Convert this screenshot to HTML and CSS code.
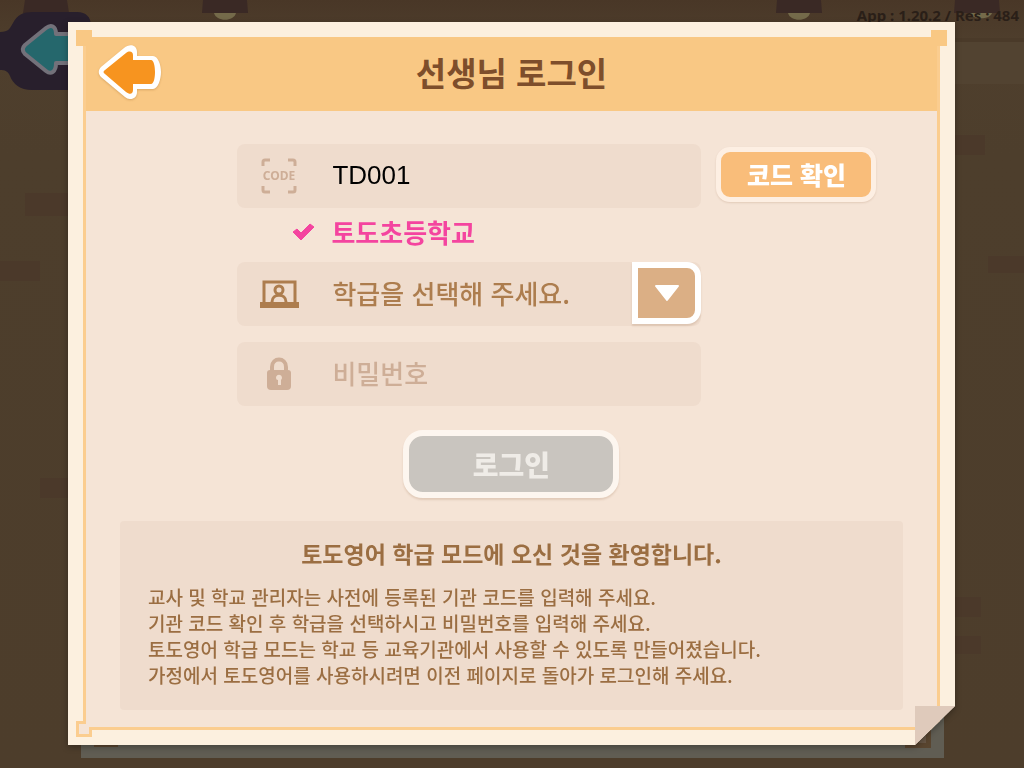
FILE: index.html
```html
<!DOCTYPE html>
<html lang="ko">
<head>
  <meta charset="UTF-8">
  <meta name="viewport" content="width=device-width, initial-scale=1.0">
  <title>선생님 로그인</title>
  <link rel="stylesheet" href="styles.css">
</head>
<body>
  <svg class="scene" viewBox="0 0 1024 768" preserveAspectRatio="none" aria-hidden="true">
    <defs>
      <linearGradient id="wall" x1="0" y1="0" x2="0" y2="1">
        <stop offset="0" stop-color="#493727"/>
        <stop offset="0.06" stop-color="#4f3f2d"/>
        <stop offset="0.2" stop-color="#4d3e2c"/>
        <stop offset="1" stop-color="#4d3d2b"/>
      </linearGradient>
    </defs>
    <rect width="1024" height="768" fill="url(#wall)"/>
    <path d="M955 42h69v42h-69z" fill="#524331"/>
    <path d="M955 38h69v4h-69z" fill="#4a3a29"/>
    <!-- bricks -->
    <g fill="#4b392a">
      <rect x="25" y="193" width="43" height="23"/>
      <rect x="0" y="261" width="40" height="20"/>
      <rect x="40" y="478" width="28" height="20"/>
      <rect x="955" y="135" width="30" height="20"/>
      <rect x="988" y="256" width="36" height="17"/>
      <rect x="955" y="597" width="26" height="20"/>
      <rect x="955" y="636" width="26" height="18"/>
    </g>
    <!-- lamps -->
    <g fill="#3a2925">
      <path d="M25 0h42l2 13H23z"/>
      <path d="M203 0h44l1 13h-46z"/>
      <path d="M777 0h44l1 13h-46z"/>
      <path d="M955 0h44l1 13h-46z"/>
    </g>
    <g fill="#746a4a">
      <path d="M214 13h22c-2 9-20 9-22 0z"/>
      <path d="M788 13h22c-2 9-20 9-22 0z"/>
      <path d="M970 13h22c-2 7-20 7-22 0z"/>
    </g>
    <path d="M0 32c9 0 10-4 13-9 4-8 10-11 20-11h44c9 0 14 5 14 14v64H32c-12 0-19-6-22-14-2-5-5-6-10-6z" fill="#281f2c"/>
    <path d="M25 45 46 28c5-4 10-2 10 6h30v29H56c0 9-5 12-10 8L25 54c-3-3-3-6 0-9z" fill="#25676c" stroke="#73717a" stroke-width="4" stroke-linejoin="round"/>
    <!-- sheet lying underneath -->
    <rect x="81" y="700" width="863" height="58" fill="#605d53"/>
    <path d="M94 742h24v5H94zM905 730h26v18h-26z" fill="#59452f"/>
    <path d="M919 730h7v13h-7z" fill="#685746"/>
  </svg>
  <div class="version">App : 1.20.2 / Res : 484</div>

  <main class="page">
    <div class="paper-shadow">
      <div class="paper">
        <div class="frame">
          <header class="header">
            <button class="back" type="button" aria-label="뒤로">
              <svg viewBox="0 0 64 54" width="64" height="54">
                <path d="M3 22 26 3c6-5 13-3 13 4v4h16c5 0 8 9 8 16s-3 17-8 17H39v3c0 7-7 9-12 5L3 32c-3-3-3-7 0-10z" fill="#fff"/>
                <path d="M7 25 28 8c4-3 7-1 7 2v5h18c3 0 4 7 4 12s-1 12-4 12H35v6c0 4-3 5-7 2L7 29c-2-1-2-3 0-4z" fill="#f7941f"/>
              </svg>
            </button>
            <h1 class="title">선생님 로그인</h1>
          </header>

          <form class="login-form">
            <div class="field code-field">
              <svg class="icon" viewBox="0 0 40 40" width="40" height="40">
                <path d="M4 10V6q0-2 2-2h5M29 4h5q2 0 2 2v4M36 30v4q0 2-2 2h-5M11 36H6q-2 0-2-2v-4" fill="none" stroke="#ceae97" stroke-width="3"/>
                <text x="20" y="24" text-anchor="middle" class="code-label">CODE</text>
              </svg>
              <input class="control code-input" type="text" value="TD001" aria-label="기관 코드">
            </div>
            <button class="check-button" type="button">코드 확인</button>

            <p class="school">
              <svg viewBox="0 0 24 18" width="24" height="18" aria-hidden="true">
                <path d="m2 9 4-3 4 4 9-9 4 3-13 13z" fill="#f4449f" stroke="#f4449f" stroke-linejoin="round"/>
              </svg>
              토도초등학교
            </p>

            <div class="field class-field">
              <svg class="icon" viewBox="0 0 40 30" width="40" height="30">
                <path d="M5 24V3h31v21" fill="none" stroke="#ad7d4e" stroke-width="3"/>
                <path d="M1 23h39v6H1z" fill="#ad7d4e"/>
                <circle cx="20" cy="11" r="4" fill="none" stroke="#ad7d4e" stroke-width="3"/>
                <path d="M13 23c0-9 14-9 14 0" fill="none" stroke="#ad7d4e" stroke-width="3"/>
              </svg>
              <select class="control class-select" aria-label="학급">
                <option>학급을 선택해 주세요.</option>
              </select>
              <span class="arrow">
                <svg viewBox="0 0 26 18" width="26" height="18" aria-hidden="true">
                  <path d="M2 2h22L13 16z" fill="#fff" stroke="#fff" stroke-width="2" stroke-linejoin="round"/>
                </svg>
              </span>
            </div>

            <div class="field password-field">
              <svg class="icon" viewBox="0 0 24 34" width="24" height="34">
                <path d="M5 16V10c0-10 14-10 14 0v6" fill="none" stroke="#ceae97" stroke-width="4"/>
                <path d="M3 13h18q3 0 3 3v13q0 4-4 4H4q-4 0-4-4V16q0-3 3-3z" fill="#ceae97"/>
                <path d="M9 21a3 3 0 1 1 5 2v5h-3v-5q-2 0-2-2z" fill="#efdccd"/>
              </svg>
              <input class="control" type="password" placeholder="비밀번호" aria-label="비밀번호">
            </div>

            <button class="login-button" type="submit" disabled>로그인</button>
          </form>

          <section class="notice">
            <h2 class="notice-title">토도영어 학급 모드에 오신 것을 환영합니다.</h2>
            <p>교사 및 학교 관리자는 사전에 등록된 기관 코드를 입력해 주세요.</p>
            <p>기관 코드 확인 후 학급을 선택하시고 비밀번호를 입력해 주세요.</p>
            <p>토도영어 학급 모드는 학교 등 교육기관에서 사용할 수 있도록 만들어졌습니다.</p>
            <p>가정에서 토도영어를 사용하시려면 이전 페이지로 돌아가 로그인해 주세요.</p>
          </section>
        </div>
        <span class="corner top-left"></span>
        <span class="corner top-right"></span>
        <span class="corner bottom-left"></span>
        <span class="fold"></span>
      </div>
    </div>
  </main>
</body>
</html>
```
FILE: styles.css
```css
* {
  box-sizing: border-box;
}

body {
  margin: 0;
  min-height: 100vh;
  position: relative;
  background: #4d3d2b;
  font-family: "Noto Sans CJK KR", "Noto Sans CJK JP", sans-serif;
}

button,
input,
select {
  font-family: inherit;
}

/* Backdrop */
.scene {
  position: absolute;
  top: 0;
  left: 0;
  width: 100%;
  height: 100%;
}

.version {
  position: absolute;
  top: 5px;
  right: 5px;
  font: bold 15px/20px "Noto Sans", sans-serif;
  color: #2a1f18;
}

.page {
  position: relative;
  padding: 22px 69px 23px 68px;
}

/* Paper */
.paper-shadow {
  filter: drop-shadow(0 2px 3px rgba(0, 0, 0, 0.3));
}

.paper {
  position: relative;
  padding: 15px;
  background: #fcf0df;
  clip-path: polygon(0 0, 100% 0, 100% calc(100% - 39px), calc(100% - 40px) 100%, 0 100%);
}

.frame {
  border: 3px solid #fbcd8f;
  border-top: none;
  background: #f5e4d6;
  padding-bottom: 17px;
}

.corner {
  position: absolute;
  width: 16px;
  height: 16px;
  background: #f9c884;
}

.top-left {
  top: 8px;
  left: 8px;
}

.top-right {
  top: 8px;
  right: 8px;
}

/* outlined notch, open towards the frame */
.bottom-left {
  bottom: 8px;
  left: 8px;
  background: #f5e4d6;
  border: 3px solid #fbcd8f;
  clip-path: polygon(0 0, 10px 0, 10px 6px, 100% 6px, 100% 100%, 0 100%);
}

.fold {
  position: absolute;
  right: 0;
  bottom: 0;
  width: 40px;
  height: 39px;
  background: #dfcabb;
}

/* Header */
.header {
  display: grid;
  grid-template-columns: 64px 1fr 64px;
  align-items: center;
  height: 74px;
  padding: 0 12px 4px;
  background: #f9c884;
}

.back {
  height: 54px;
  padding: 0;
  border: none;
  background: none;
  cursor: pointer;
  filter: drop-shadow(0 1px 1px rgba(150, 90, 20, 0.3));
}

.back svg {
  display: block;
}

.title {
  margin: 0;
  font-size: 33px;
  line-height: 48px;
  text-align: center;
  color: #7e4e2b;
}

/* Form */
.login-form {
  display: grid;
  grid-template-columns: 9fr minmax(0, 464px) 14fr;
  align-items: center;
  padding-top: 33px;
}

.field {
  grid-column: 2;
  display: grid;
  grid-template-columns: 83px 1fr 69px;
  height: 64px;
  border-radius: 8px;
  background: #efdccd;
}

.icon {
  grid-area: 1 / 1;
  place-self: center;
  z-index: 1;
}

.code-label {
  font: bold 12px "Noto Sans", sans-serif;
  fill: #ceae97;
}

.control {
  grid-area: 1 / 1 / 2 / 4;
  width: 100%;
  min-width: 0;
  padding: 0 16px 4px 95px;
  border: none;
  border-radius: 8px;
  outline: none;
  background: none;
  font-size: 26px;
  color: #ad7d4e;
}

.control::placeholder {
  color: #ceae97;
  opacity: 1;
}

.code-input {
  padding-bottom: 2px;
  font-family: "Liberation Sans", Arial, sans-serif;
  color: #000;
}

.class-select {
  appearance: none;
  font-weight: 500;
  cursor: pointer;
}

.arrow {
  grid-area: 1 / 3;
  display: grid;
  place-items: center;
  height: 62px;
  border: 6px solid #fff;
  border-radius: 0 14px 14px 0;
  background: #dbaf85;
  box-shadow: 0 2px 2px rgba(120, 70, 30, 0.15);
  pointer-events: none;
}

.check-button {
  grid-column: 3;
  justify-self: start;
  width: 160px;
  height: 55px;
  margin: 0 0 3px 15px;
  padding: 0 0 2px;
  border: 5px solid #fdefe3;
  border-radius: 14px;
  background: #f9bd7a;
  box-shadow: 0 1px 2px rgba(120, 70, 30, 0.15);
  font-size: 25px;
  font-weight: 900;
  line-height: 40px;
  color: #fff;
  cursor: pointer;
}

.school {
  grid-column: 2;
  display: flex;
  align-items: center;
  gap: 16px;
  margin: 0;
  padding: 0 0 6px 54px;
  height: 54px;
  font-size: 26px;
  font-weight: bold;
  line-height: 48px;
  color: #f4449f;
}

.password-field {
  margin-top: 16px;
}

.password-field .control {
  font-weight: 500;
}

.login-button {
  grid-column: 1 / -1;
  justify-self: center;
  width: 216px;
  height: 68px;
  margin: 24px 0 23px;
  padding: 0;
  border: 6px solid #fdf6ef;
  border-radius: 20px;
  background: #c9c5bf;
  box-shadow: 0 2px 2px rgba(120, 70, 30, 0.15);
  font-size: 28px;
  font-weight: 900;
  color: #efece7;
}

/* Notice */
.notice {
  margin: 0 34px;
  padding: 15px 28px 22px;
  border-radius: 4px;
  background: #efdccd;
  color: #9b6e42;
}

.notice-title {
  margin: 0 0 14px;
  font-size: 23px;
  line-height: 34px;
  text-align: center;
}

.notice p {
  margin: 0;
  font-size: 19px;
  font-weight: 500;
  line-height: 26px;
}
```
